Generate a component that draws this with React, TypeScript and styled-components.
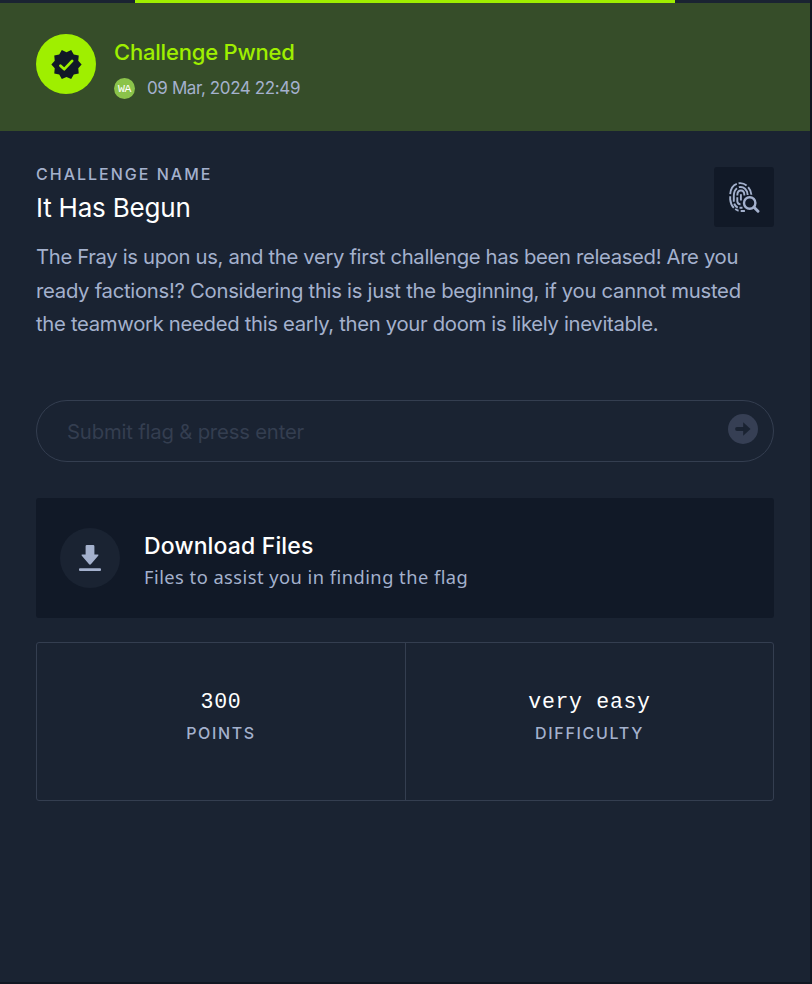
import React from "react";
import styled, { createGlobalStyle } from "styled-components";

const c = {
  bg: "#1a2332",
  dark: "#111927",
  line: "#343e50",
  muted: "#a4b1cd",
  green: "#9fef00",
};

const GlobalStyle = createGlobalStyle`
  * { box-sizing: border-box; }
  body { margin: 0; background: #10151f; font-family: Inter, "Liberation Sans", sans-serif; }
`;

const Page = styled.main`
  width: 812px;
  height: 984px;
  padding: 0 2px 2px 0;
  background: #111722;
  overflow: hidden;
`;

const Panel = styled.section`
  height: 982px;
  background: ${c.bg};
`;

const Progress = styled.div`
  width: 540px;
  height: 3px;
  margin: 0 auto;
  background: ${c.green};
`;

const Banner = styled.header`
  display: flex;
  gap: 18px;
  height: 128px;
  padding: 31px 36px 0;
  background: #364d29;
`;

const Round = styled.div<{ $fill: string }>`
  display: flex;
  align-items: center;
  justify-content: center;
  flex: none;
  width: 60px;
  height: 60px;
  border-radius: 50%;
  background: ${(p) => p.$fill};
`;

const Text = styled.div<{ $size: number; $line: number; $track?: number; $weight?: number; $color?: string }>`
  font-size: ${(p) => p.$size}px;
  line-height: ${(p) => p.$line}px;
  letter-spacing: ${(p) => p.$track ?? 0}px;
  font-weight: ${(p) => p.$weight ?? 400};
  color: ${(p) => p.$color ?? c.muted};
  white-space: nowrap;
`;

const SolvedRow = styled.div`
  display: flex;
  align-items: center;
  gap: 12px;
  margin-top: 6px;
`;

const Avatar = styled.div`
  width: 21px;
  height: 21px;
  border-radius: 50%;
  background: #8bc34a;
  color: #fff;
  font: 400 11.5px/22px "Liberation Mono", monospace;
  letter-spacing: -0.4px;
  text-align: center;
`;

const Body = styled.div`
  padding: 36px 36px 0;
`;

const Intro = styled.div`
  display: flex;
  justify-content: space-between;
`;

const Title = styled(Text)`
  margin-top: 7px;
`;

const Category = styled.div`
  display: flex;
  align-items: center;
  justify-content: center;
  width: 60px;
  height: 60px;
  border-radius: 3px;
  background: ${c.dark};
`;

const Description = styled.div`
  margin-top: 12px;
`;

const FlagField = styled.div`
  display: flex;
  align-items: center;
  justify-content: space-between;
  height: 62px;
  margin-top: 59px;
  padding: 0 15px 0 30px;
  border: 1px solid ${c.line};
  border-radius: 31px;
`;

const Placeholder = styled(Text)`
  padding-top: 2px;
`;

const SendIcon = styled.svg`
  margin-bottom: 4px;
`;

const Download = styled.div`
  display: flex;
  align-items: center;
  gap: 24px;
  height: 120px;
  margin-top: 36px;
  padding: 0 24px;
  border-radius: 3px;
  background: ${c.dark};
`;

const DownloadLabel = styled.div`
  padding-top: 7px;
`;

const Hint = styled(Text)`
  margin-top: -1px;
  font-family: "Noto Sans", sans-serif;
`;

const Stats = styled.div`
  display: grid;
  grid-template-columns: 369px 1fr;
  height: 159px;
  margin-top: 24px;
  border: 1px solid ${c.line};
  border-radius: 3px;
`;

const Stat = styled.div`
  padding-top: 43px;
  text-align: center;
  &:first-child { border-right: 1px solid ${c.line}; }
`;

const Value = styled(Text)`
  font-family: "Liberation Mono", monospace;
`;

const Verified = () => (
  <svg width="33" height="33" viewBox="0 0 24 24">
    <path fill={c.dark} d="M23 12l-2.44-2.78.34-3.68-3.61-.82-1.89-3.18L12 3 8.6 1.54 6.71 4.72l-3.61.81.34 3.68L1 12l2.44 2.78-.34 3.69 3.61.82 1.89 3.18L12 21l3.4 1.46 1.89-3.18 3.61-.82-.34-3.68z" />
    <path d="M7.6 12.9l2.8 2.5 5.7-6" fill="none" stroke={c.green} strokeWidth="2" strokeLinecap="round" strokeLinejoin="round" />
  </svg>
);

const Fingerprint = () => (
  <svg width="31" height="31" viewBox="0 0 31 31" fill="none" stroke={c.muted} strokeWidth="1.9">
    <path d="M1.2 12.2C1.6 7.2 4 3.2 7.8 1.9M9.6 1.3c3-.5 5.6.2 8 2.2M19.2 5.2c2 2.3 3 4.8 3.2 7.6M1.2 14.2v3.2c.3 3.5 1.5 6.3 3.6 8.5M6.2 27.1c1.1.8 2.1 1.3 3.4 1.6M11.7 29h4.2" />
    <path d="M4.8 19.8v-6.2c.1-3.2 1.1-5.9 3.2-7.4M9.8 5.2c5-1.2 8.7 2.6 8.9 7.8M5.2 21.6c.7 2.1 1.9 3.3 3.6 4M10.5 25.8h3" />
    <path d="M8.3 13.5c0-3.2 1.4-5 3.6-5s3.5 1.8 3.5 5M8.3 15.3v4.2c.3 1.8 1.3 2.8 3.2 2.8" />
    <path d="M11.9 12.2v6.3" />
    <circle cx="20.7" cy="21" r="7.6" fill={c.dark} stroke="none" />
    <circle cx="20.7" cy="21" r="5.7" strokeWidth="2.4" />
    <path d="M25 25.3l4 4" strokeWidth="2.9" strokeLinecap="round" />
  </svg>
);

export default function App() {
  return (
    <Page>
      <GlobalStyle />
      <Panel>
        <Progress />
        <Banner>
          <Round $fill={c.green}><Verified /></Round>
          <div>
            <Text $size={22} $line={36} $track={-0.2} $weight={500} $color={c.green}>Challenge Pwned</Text>
            <SolvedRow>
              <Avatar>WA</Avatar>
              <Text $size={17} $line={24} $track={-0.39}>09 Mar, 2024 22:49</Text>
            </SolvedRow>
          </div>
        </Banner>
        <Body>
          <Intro>
            <div>
              <Text $size={16} $line={14} $track={2} $weight={550}>CHALLENGE NAME</Text>
              <Title $size={26} $line={40} $track={-0.2} $color="#fff">It Has Begun</Title>
            </div>
            <Category><Fingerprint /></Category>
          </Intro>
          <Description>
            <Text $size={20.3} $line={33.5} $track={-0.345}>The Fray is upon us, and the very first challenge has been released! Are you</Text>
            <Text $size={20.3} $line={33.5} $track={-0.278}>ready factions!? Considering this is just the beginning, if you cannot musted</Text>
            <Text $size={20.3} $line={33.5} $track={-0.315}>the teamwork needed this early, then your doom is likely inevitable.</Text>
          </Description>
          <FlagField>
            <Placeholder $size={20.3} $line={30} $track={-0.18} $color={c.line}>Submit flag &amp; press enter</Placeholder>
            <SendIcon width="30" height="30" viewBox="0 0 30 30">
              <circle cx="15" cy="15" r="15" fill="#363f54" />
              <path d="M9 15h7" stroke={c.bg} strokeWidth="3.8" strokeLinecap="round" />
              <path d="M15.2 8.2l7.3 6.8-7.3 6.8z" fill={c.bg} />
            </SendIcon>
          </FlagField>
          <Download>
            <Round $fill={c.bg}>
              <svg width="22" height="26" viewBox="0 0 22 26" fill={c.muted}>
                <path d="M7.8 0h6.4q1.2 0 1.2 1.2v8.3h3.2q1.6 0 .6 1.3l-7.1 8.3q-1.1 1.1-2.2 0L2.8 10.8q-1-1.3.6-1.3h3.2V1.2Q6.6 0 7.8 0z" />
                <rect y="23.2" width="22" height="2.8" rx="1" />
              </svg>
            </Round>
            <DownloadLabel>
              <Text $size={23} $line={33} $track={0.15} $weight={550} $color="#fff">Download Files</Text>
              <Hint $size={18.3} $line={30} $track={0.47}>Files to assist you in finding the flag</Hint>
            </DownloadLabel>
          </Download>
          <Stats>
            <Stat>
              <Value $size={21.5} $line={32} $track={0.7} $color="#fff">300</Value>
              <Text $size={16} $line={31} $track={1.65} $weight={550}>POINTS</Text>
            </Stat>
            <Stat>
              <Value $size={21.5} $line={32} $track={0.7} $color="#fff">very easy</Value>
              <Text $size={16} $line={31} $track={1.7} $weight={550}>DIFFICULTY</Text>
            </Stat>
          </Stats>
        </Body>
      </Panel>
    </Page>
  );
}
